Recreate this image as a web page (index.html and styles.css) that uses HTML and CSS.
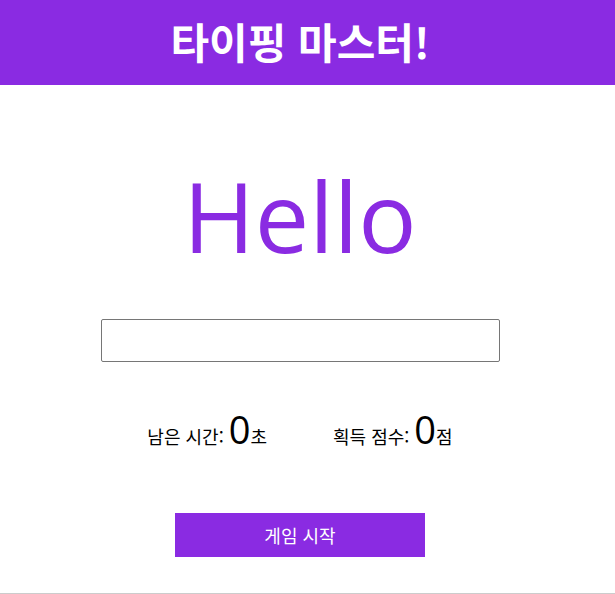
FILE: index.html
```html
<!DOCTYPE html>
<html lang="ko">
<head>
<meta charset="utf-8">
<title>타이핑 마스터!</title>
<link rel="stylesheet" href="styles.css">
</head>
<body>
<div class="page">
  <header class="header">
    <h1 class="title">타이핑 마스터!</h1>
  </header>
  <main class="main">
    <div class="word">Hello</div>
    <input class="word-input" type="text">
    <div class="stats">
      <div class="stat">남은 시간: <span class="num">0</span>초</div>
      <div class="stat">획득 점수: <span class="num">0</span>점</div>
    </div>
    <button class="start-btn">게임 시작</button>
  </main>
  <div class="bottom-line"></div>
</div>
</body>
</html>
```

FILE: styles.css
```css
html, body {
  margin: 0;
  padding: 0;
  background: #ffffff;
}

.page {
  display: flex;
  flex-direction: column;
  height: 594px;
  font-family: "Open Sans", "Noto Sans CJK KR", sans-serif;
}

.header {
  background: #8a2be2;
  height: 85px;
  padding-right: 15px;
  display: flex;
  align-items: center;
  justify-content: center;
}

.title {
  margin: 0;
  color: #ffffff;
  font-family: "Noto Sans CJK KR", sans-serif;
  font-weight: 700;
  font-size: 42px;
  line-height: 1;
  transform: translateY(-2px);
}

.main {
  flex: 1;
  padding-right: 15px;
  display: flex;
  flex-direction: column;
  align-items: center;
}

.word {
  margin-top: 62px;
  color: #8a2be2;
  font-family: "Open Sans", sans-serif;
  font-size: 97px;
  line-height: 136px;
}

.word-input {
  box-sizing: border-box;
  margin-top: 36px;
  width: 399px;
  height: 43px;
  border: 1px solid #767676;
  border-radius: 2px;
  padding: 0 6px;
  font-size: 18px;
  outline: none;
}

.stats {
  margin-top: 42px;
  display: flex;
  justify-content: center;
  align-items: baseline;
  gap: 66px;
  color: #000000;
  font-family: "Noto Sans CJK KR", sans-serif;
  font-size: 18px;
}

.stat {
  line-height: 50px;
}

.num {
  font-family: "Open Sans", sans-serif;
  font-size: 38px;
}

.start-btn {
  margin-top: 52px;
  width: 250px;
  height: 44px;
  border: none;
  background: #8a2be2;
  color: #ffffff;
  font-family: "Noto Sans CJK KR", sans-serif;
  font-size: 18px;
  padding: 0;
}

.bottom-line {
  height: 1px;
  background: #cccccc;
}
```
